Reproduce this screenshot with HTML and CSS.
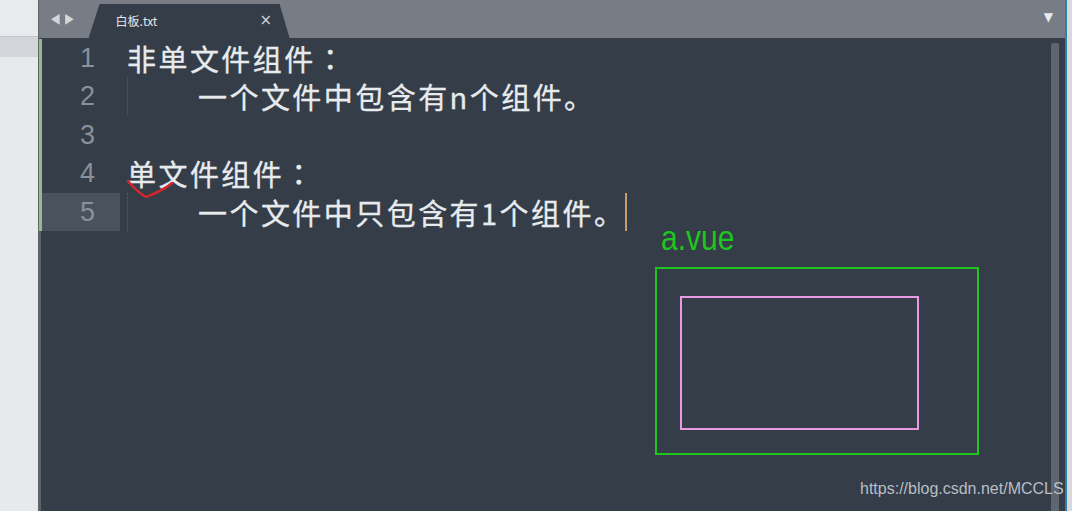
FILE: index.html
```html
<!DOCTYPE html>
<html lang="zh">
<head>
<meta charset="utf-8">
<link rel="stylesheet" href="styles.css">
</head>
<body>
<div class="app">
  <aside class="side">
    <div class="side-top"></div>
    <div class="side-sel"></div>
    <div class="side-rest"></div>
  </aside>
  <main class="window">
    <header class="tabbar">
      <div class="arrows"><span class="arr">&#9664;</span><span class="arr">&#9654;</span></div>
      <div class="tab"><span class="tab-title">白板.txt</span><span class="tab-close">×</span></div>
      <div class="spacer"></div>
      <span class="dropdown">&#9660;</span>
    </header>
    <section class="editor">
      <div class="lines">
        <div class="line"><span class="num">1</span><span class="code">非单文件组件<span class="colon">：</span></span></div>
        <div class="line"><span class="num">2</span><span class="code"><span class="indent"></span>一个文件中包含有n个组件。</span></div>
        <div class="line"><span class="num">3</span><span class="code"></span></div>
        <div class="line"><span class="num">4</span><span class="code">单文件组件<span class="colon">：</span></span></div>
        <div class="line current"><span class="num">5</span><span class="code"><span class="indent"></span>一个文件中只包含有1个组件。<span class="cursor"></span></span></div>
        <div class="rest"></div>
      </div>
      <div class="scroll"><div class="thumb"></div></div>
    </section>
  </main>
  <div class="edge"></div>
</div>
<svg class="squiggle" width="50" height="24" viewBox="0 0 50 24"><path d="M2 3 C7 9 13 15 20 19 C28 16 38 12 46 5" fill="none" stroke="#d6262b" stroke-width="2.4" stroke-linecap="round" stroke-linejoin="round"/></svg>
<div class="label">a.vue</div>
<div class="box-outer"></div>
<div class="box-inner"></div>
<div class="watermark">https://blog.csdn.net/MCCLS</div>
</body>
</html>
```
FILE: styles.css
```css
* { box-sizing: border-box; margin: 0; padding: 0; }
html, body { width: 1072px; height: 511px; overflow: hidden; }
body { position: relative; background: #343d48; font-family: "Noto Sans CJK SC", "Noto Sans", sans-serif; }
.app { display: flex; width: 1072px; height: 511px; }
.side { width: 39px; display: flex; flex-direction: column; border-right: 1px solid #5f646b; }
.side-top { height: 36px; background: #e9eaed; }
.side-sel { height: 21px; background: #d3d5da; border-top: 1px solid #c4c7cc; }
.side-rest { flex: 1; background: #e8e9ec; }
.window { flex: 1; display: flex; flex-direction: column; min-width: 0; }
.tabbar { height: 38px; background: #777c85; display: flex; align-items: flex-end; }
.arrows { display: flex; gap: 3px; padding-left: 11px; height: 38px; align-items: center; color: #d3d6da; font-size: 14px; font-family: "DejaVu Sans", sans-serif; padding-bottom: 2px; }
.arr { display: block; transform: scaleX(0.8); }
.tab { margin-left: 14px; width: 201px; height: 34px; background: #343d48; clip-path: polygon(11px 0, calc(100% - 10px) 0, 100% 100%, 0 100%); display: flex; align-items: center; padding: 0 0 2px 27px; }
.tab-title { color: #e6e7ea; font-size: 12px; font-family: "Noto Sans CJK SC", sans-serif; width: 144px; }
.tab-close { color: #d0d3d7; font-size: 15px; font-family: "DejaVu Sans", sans-serif; line-height: 1; }
.spacer { flex: 1; }
.dropdown { color: #e9ebee; font-size: 12px; font-family: "DejaVu Sans", sans-serif; height: 38px; display: flex; align-items: center; padding-right: 12px; padding-bottom: 4px; }
.editor { flex: 1; display: flex; background: #343d48; }
.lines { flex: 1; display: flex; flex-direction: column; padding-top: 1px; }
.line { display: flex; height: 38.4px; }
.num { width: 81px; border-left: 3px solid #8dbf88; text-align: right; padding-right: 25px; color: #8a919a; font-family: "Liberation Sans", Arial, sans-serif; font-size: 27px; line-height: 38.4px; }
.line.current .num { background: #4a525d; }
.code { padding-left: 7px; color: #e8ebee; font-size: 29px; letter-spacing: 2.45px; line-height: 38.4px; white-space: pre; display: flex; align-items: center; -webkit-text-stroke: 0.3px #e8ebee; }
.colon { font-family: "Noto Sans CJK TC", sans-serif; }
.indent { display: inline-block; width: 71px; height: 38.4px; border-left: 1px dotted #56606c; }
.cursor { display: inline-block; width: 2px; height: 38px; background: #c99b6e; margin-left: 0; }
.rest { flex: 1; border-left: 2px solid #5d6168; }
.scroll { width: 14px; padding-top: 5px; display: flex; }
.thumb { width: 8px; background: #5e6570; border-radius: 2px 2px 0 0; }
.edge { width: 7px; background: #d7d9dd; border-left: 2px solid #2f7fb6; }
.squiggle { position: absolute; left: 126px; top: 178px; }
.label { position: absolute; left: 661px; top: 225px; font-family: "Liberation Sans", Arial, sans-serif; font-size: 30px; line-height: 30px; color: #1fc61f; transform: scaleY(1.15); transform-origin: left 25px; }
.box-outer { position: absolute; left: 655px; top: 267px; width: 324px; height: 188px; border: 2px solid #20c620; }
.box-inner { position: absolute; left: 680px; top: 296px; width: 239px; height: 134px; border: 2px solid #e69ae6; }
.watermark { position: absolute; left: 860px; top: 480px; font-family: "Liberation Sans", Arial, sans-serif; font-size: 16px; color: #babec4; }
```
